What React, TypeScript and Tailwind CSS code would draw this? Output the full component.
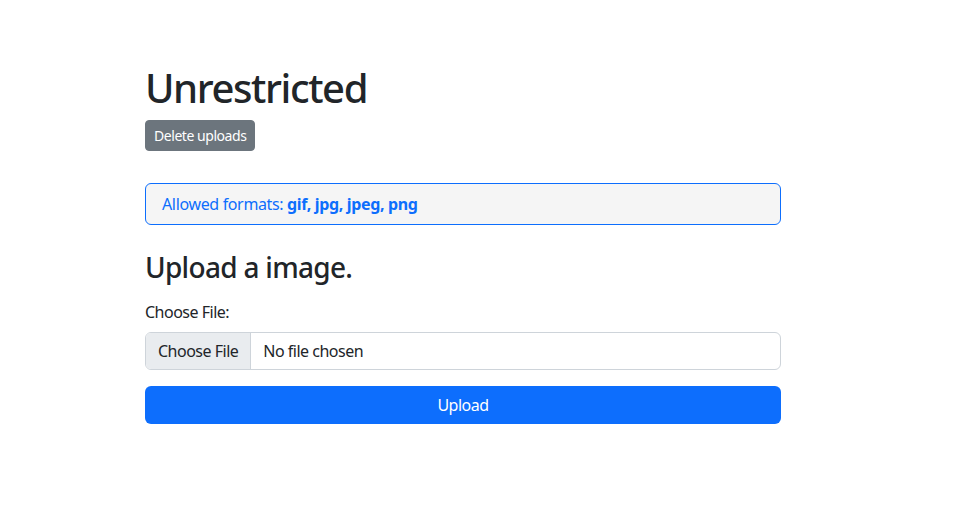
import React from "react";

export default function App() {
  return (
    <div className="min-h-[508px] w-full bg-white text-[#212529] font-['Noto_Sans',sans-serif]">
      <div className="ml-[145px] w-[636px] pt-[64px]">
        <h1 className="mb-2 text-[40px] font-medium leading-[48px] tracking-[-1.4px]">Unrestricted</h1>
        <button className="h-[31px] rounded-[4px] border border-[#6c757d] bg-[#6c757d] px-2 text-[14px] leading-[21px] tracking-[-0.45px] text-white">
          Delete uploads
        </button>
        <div className="mt-[32px] flex h-[42px] items-center rounded-[6px] border border-[#0d6efd] bg-[#f5f5f5] px-4 text-[16px] tracking-[-0.35px] text-[#0d6efd]">
          <span>
            Allowed formats: <b className="font-bold">gif, jpg, jpeg, png</b>
          </span>
        </div>
        <h3 className="mt-[25px] mb-4 text-[28px] font-medium leading-[34px] tracking-[-0.7px]">Upload a image.</h3>
        <div className="mb-2 text-[16px] leading-[24px] tracking-[-0.5px]">Choose File:</div>
        <div className="flex h-[38px] overflow-hidden rounded-[6px] border border-[#ced4da] text-[16px] leading-[24px] tracking-[-0.5px]">
          <div className="flex items-center border-r border-[#ced4da] bg-[#e9ecef] px-3">Choose File</div>
          <div className="flex items-center px-3">No file chosen</div>
        </div>
        <button className="mt-4 flex h-[38px] w-full items-center justify-center rounded-[6px] bg-[#0d6efd] text-[16px] tracking-[-0.5px] text-white">
          Upload
        </button>
      </div>
    </div>
  );
}
